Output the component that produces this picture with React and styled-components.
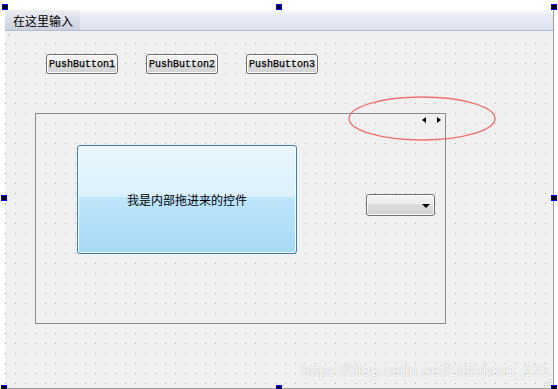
import React from "react";
import styled, { createGlobalStyle } from "styled-components";

const Global = createGlobalStyle`
  html, body { margin: 0; padding: 0; background: #ffffff; }
  body { font-family: "Liberation Sans", Arial, sans-serif; }
`;

const Page = styled.div`
  position: relative;
  width: 558px;
  height: 389px;
  overflow: hidden;
  background: #ffffff;
  padding: 10px 0 0 5px;
  box-sizing: border-box;
`;

const Form = styled.div`
  position: relative;
  width: 549px;
  height: 379px;
  box-sizing: border-box;
  border-right: 1px solid #9c9c9c;
  border-bottom: 1px solid #9c9c9c;
  background: #f0f0f0;
  display: flex;
  flex-direction: column;
`;

const MenuBar = styled.div`
  height: 20px;
  border-bottom: 1px solid #b4bbcd;
  background: linear-gradient(#f8f9fd 0%, #e9ecf6 30%, #dce1f1 100%);
  display: flex;
  align-items: stretch;
`;

const MenuItem = styled.div`
  width: 75px;
  padding-left: 8px;
  box-sizing: border-box;
  display: flex;
  align-items: center;
  font-family: "Noto Sans CJK SC", sans-serif;
  font-size: 12px;
  color: #000;
  background: linear-gradient(#eef0f5 0%, #dcdfe8 45%, #cbd1df 100%);
`;

const ToolStrip = styled.div`
  height: 12px;
  position: relative;
  background: #f0f0f0;
`;

const Grip = styled.span`
  position: absolute;
  left: 3px;
  top: 3px;
  width: 2px;
  height: 2px;
  background: #d0d0d0;
`;

const Canvas = styled.div`
  position: relative;
  flex: 1;
  background-color: #f0f0f0;
  background-image: conic-gradient(from 270deg at 1px 1px, #a3a3a3 90deg, transparent 0);
  background-size: 10px 10px;
  display: flex;
  flex-direction: column;
  align-items: flex-start;
`;

const ButtonRow = styled.div`
  display: flex;
  gap: 28px;
  margin: 11px 0 0 41px;
`;

const PushButton = styled.div`
  width: 72px;
  height: 20px;
  box-sizing: border-box;
  border: 1px solid #707070;
  border-radius: 3px;
  background: linear-gradient(#f4f4f4 0%, #ececec 50%, #dedede 50%, #d2d2d2 100%);
  box-shadow: inset 0 0 0 1px #fbfbfb;
  display: flex;
  align-items: center;
  justify-content: center;
  padding-top: 1px;
  font-family: "Liberation Mono", "Courier New", monospace;
  font-size: 10px;
  color: #000;
  -webkit-text-stroke: 0.25px #000;
`;

const Frame = styled.div`
  position: relative;
  width: 411px;
  height: 211px;
  margin: 39px 0 0 30px;
  box-sizing: border-box;
  border: 1px solid #8a8a92;
  display: flex;
  align-items: flex-start;
  padding: 31px 0 0 41px;
`;

const ScrollArrows = styled.div`
  position: absolute;
  top: 3px;
  right: 4px;
  display: flex;
  gap: 11px;
`;

const Arrow = styled.span`
  width: 0;
  height: 0;
  border-top: 3.5px solid transparent;
  border-bottom: 3.5px solid transparent;
  ${(p) => (p.$dir === "left" ? "border-right: 4px solid #000;" : "border-left: 4px solid #000;")}
`;

const InnerWidget = styled.div`
  width: 220px;
  height: 109px;
  box-sizing: border-box;
  border: 1px solid #3c7fb1;
  border-radius: 3px;
  box-shadow: inset 0 0 0 1px #f4fbff;
  background: linear-gradient(#eaf6fd 0%, #d9f0fc 48%, #bee6fd 48%, #a7d9f5 100%);
  display: flex;
  align-items: center;
  justify-content: center;
  font-family: "Noto Sans CJK SC", sans-serif;
  font-size: 12px;
  color: #000;
`;

const Combo = styled.div`
  width: 69px;
  height: 22px;
  margin: 49px 0 0 69px;
  box-sizing: border-box;
  border: 1px solid #707070;
  border-radius: 3px;
  background: linear-gradient(#f4f4f4 0%, #ececec 45%, #dedede 45%, #d0d0d0 100%);
  box-shadow: inset 0 0 0 1px #fafafa;
  display: flex;
  align-items: center;
  justify-content: flex-end;
  padding-right: 4px;
`;

const DownArrow = styled.span`
  width: 0;
  height: 0;
  border-left: 4px solid transparent;
  border-right: 4px solid transparent;
  border-top: 4px solid #000;
  margin-top: 1px;
`;

const Watermark = styled.div`
  position: absolute;
  right: 3px;
  bottom: 8px;
  font-family: "Liberation Sans", Arial, sans-serif;
  font-size: 16px;
  color: rgba(255, 255, 255, 0.92);
  text-shadow: 0 0 1px rgba(0, 0, 0, 0.3);
  white-space: nowrap;
`;

const ResizeGrip = styled.svg`
  position: absolute;
  right: 1px;
  bottom: 1px;
`;

const Handle = styled.span`
  position: absolute;
  width: 6px;
  height: 6px;
  box-sizing: border-box;
  border: 1px solid #0000ff;
  background: #000;
`;

const Ellipse = styled.svg`
  position: absolute;
  left: 347px;
  top: 95px;
  overflow: visible;
`;

const handles = [
  [2, 4], [276, 4], [551, 4],
  [1, 195], [551, 195],
  [1, 385], [276, 385], [551, 385],
];

export default function App() {
  return (
    <>
      <Global />
      <Page>
        <Form>
          <MenuBar>
            <MenuItem>在这里输入</MenuItem>
          </MenuBar>
          <ToolStrip>
            <Grip />
          </ToolStrip>
          <Canvas>
            <ButtonRow>
              <PushButton>PushButton1</PushButton>
              <PushButton>PushButton2</PushButton>
              <PushButton>PushButton3</PushButton>
            </ButtonRow>
            <Frame>
              <ScrollArrows>
                <Arrow $dir="left" />
                <Arrow $dir="right" />
              </ScrollArrows>
              <InnerWidget>我是内部拖进来的控件</InnerWidget>
              <Combo>
                <DownArrow />
              </Combo>
            </Frame>
            <Watermark>https://blog.csdn.net/Littlehero_121</Watermark>
            <ResizeGrip width="8" height="8" viewBox="0 0 8 8">
              <rect x="6" y="0" width="1" height="1" fill="#bdbdbd" />
              <rect x="3" y="3" width="1" height="1" fill="#bdbdbd" />
              <rect x="6" y="3" width="1" height="1" fill="#bdbdbd" />
              <rect x="0" y="6" width="1" height="1" fill="#bdbdbd" />
              <rect x="3" y="6" width="1" height="1" fill="#bdbdbd" />
              <rect x="6" y="6" width="1" height="1" fill="#bdbdbd" />
            </ResizeGrip>
          </Canvas>
        </Form>
        <Ellipse width="150" height="47" viewBox="0 0 150 47">
          <ellipse cx="75" cy="23.5" rx="73" ry="21.5" fill="none" stroke="#f05a5a" strokeOpacity="0.85" strokeWidth="1.4" />
        </Ellipse>
        {handles.map(([x, y], i) => (
          <Handle key={i} style={{ left: x, top: y }} />
        ))}
      </Page>
    </>
  );
}
